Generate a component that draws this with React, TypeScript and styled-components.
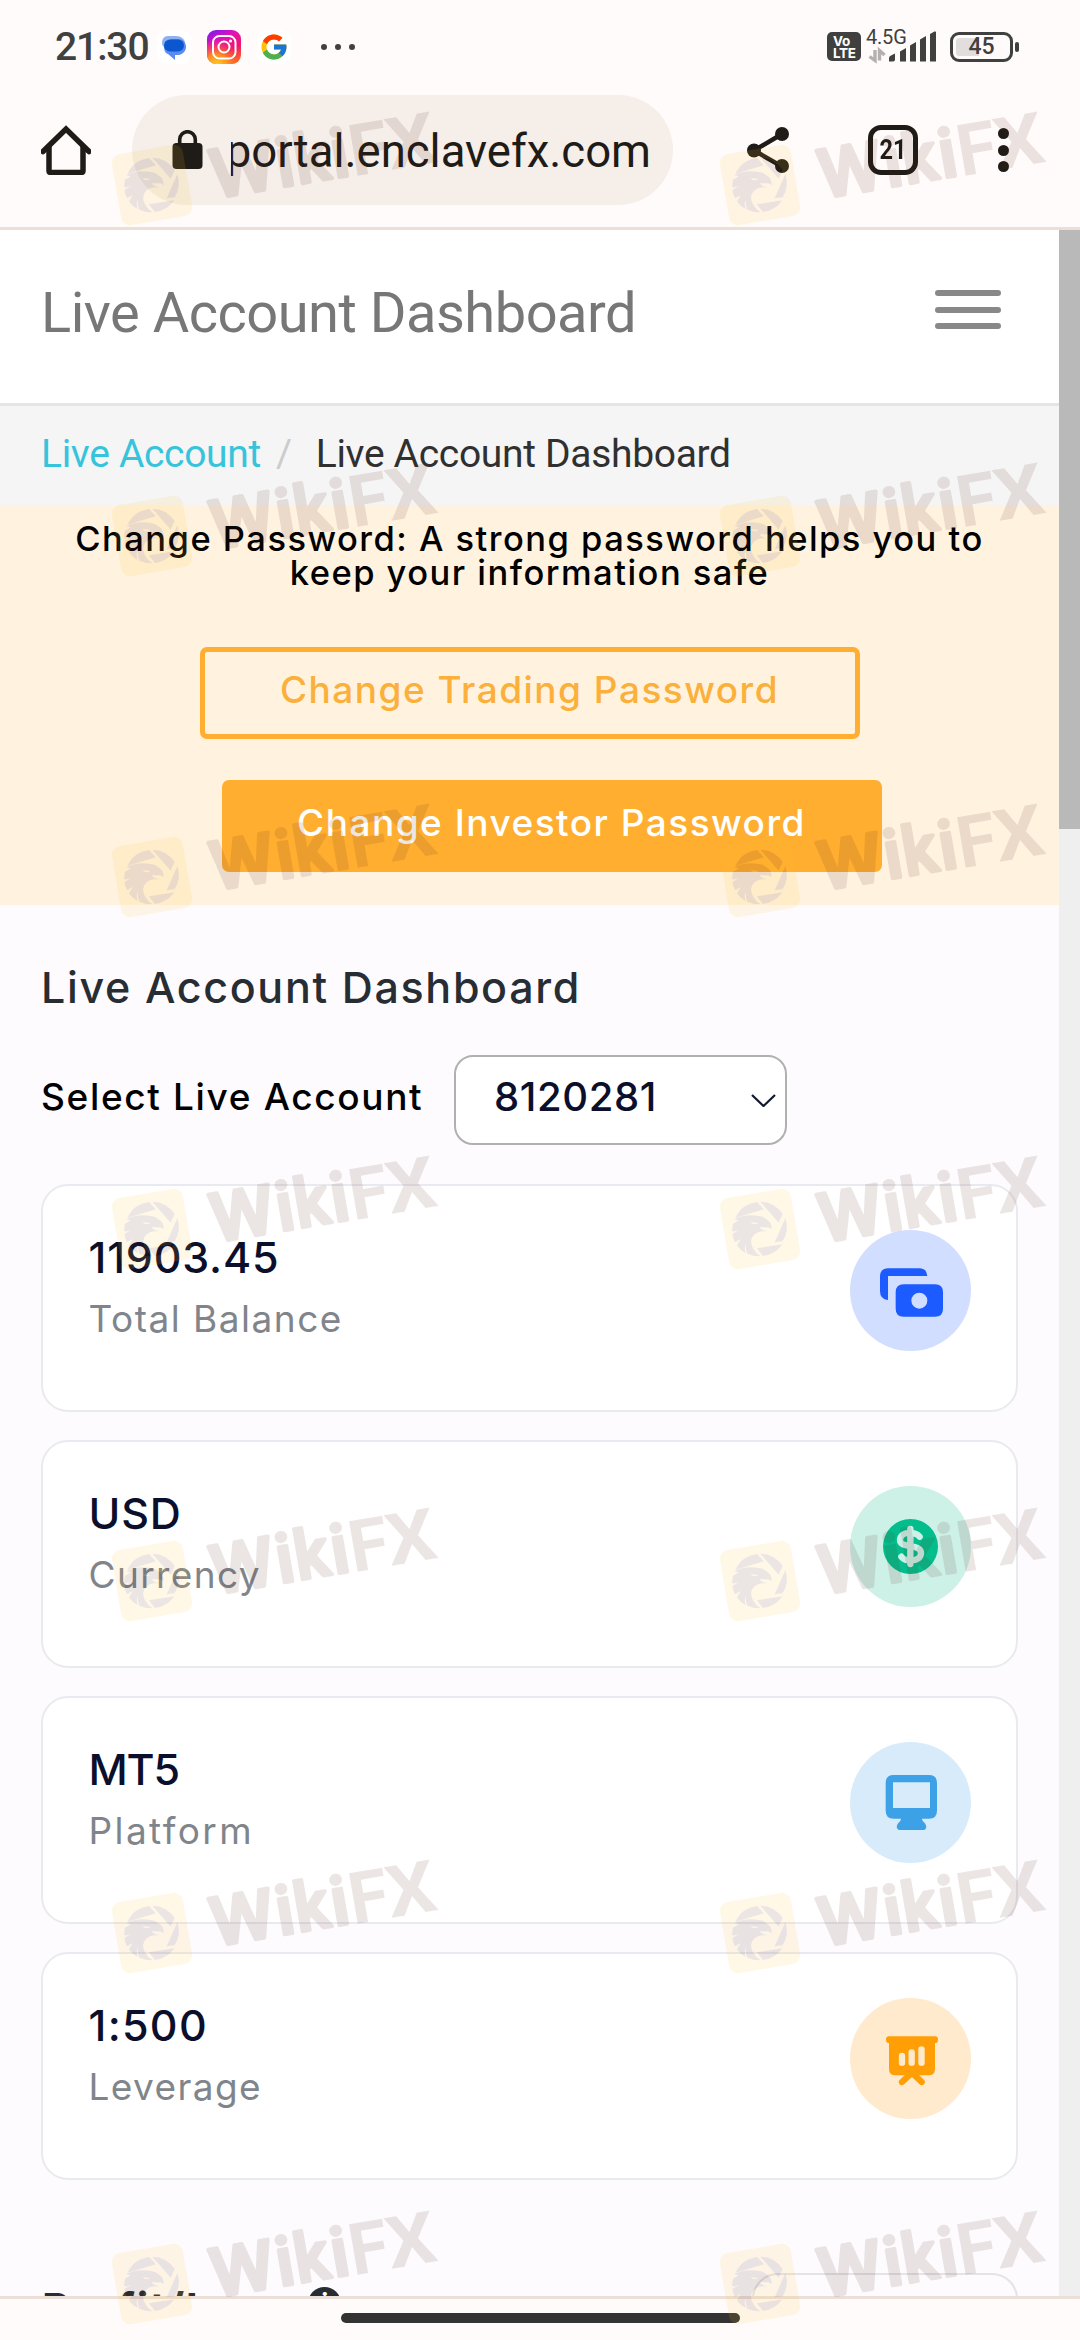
import React from "react";
import styled, { createGlobalStyle } from "styled-components";
import { FcGoogle } from "react-icons/fc";

const GlobalStyle = createGlobalStyle`
  * { box-sizing: border-box; }
  body { margin: 0; background: #fffbfa; }
`;

const roboto = `Roboto, "Noto Sans", sans-serif`;
const inter = `Inter, "Open Sans", sans-serif`;

const Screen = styled.div`
  position: relative;
  display: flex;
  flex-direction: column;
  width: 1080px;
  height: 2340px;
  overflow: hidden;
  background: #fffbfa;
  font-family: ${inter};
`;

/* ---------- system status bar ---------- */

const StatusBar = styled.div`
  display: flex;
  align-items: center;
  justify-content: space-between;
  height: 93px;
  padding: 0 61px 0 55px;
  font-family: ${roboto};
  color: #404040;
`;

const StatusGroup = styled.div`
  display: flex;
  align-items: center;
`;

const Clock = styled.span`
  width: 102px;
  font-size: 39px;
  font-weight: 500;
  line-height: 44px;
  letter-spacing: -1.1px;
`;

const AppBadge = styled.span`
  display: flex;
  align-items: center;
  justify-content: center;
  width: 34px;
  height: 34px;
  margin-right: 16px;
  border-radius: 9px;
  background: #fff;
`;

const Dots = styled.span`
  display: flex;
  gap: 8px;
  margin-left: 14px;
`;

const Dot = styled.i`
  width: 6px;
  height: 6px;
  border-radius: 50%;
  background: #404040;
`;

const VoLte = styled.span`
  display: flex;
  flex-direction: column;
  width: 34px;
  height: 29px;
  padding: 3px 0 0 6px;
  border-radius: 5px;
  background: #404040;
  color: #fff;
  font: 700 13.5px/12px ${inter};
  letter-spacing: -0.3px;
`;

const Network = styled.span`
  position: relative;
  width: 71px;
  height: 34px;
  margin: 0 13px 0 5px;
`;

const NetworkLabel = styled.span`
  position: absolute;
  left: 0;
  top: -5px;
  font-size: 20px;
  line-height: 24px;
  letter-spacing: -0.2px;
`;

const Battery = styled.span`
  display: flex;
  align-items: center;
`;

const BatteryBody = styled.span`
  display: flex;
  align-items: center;
  justify-content: center;
  width: 63px;
  height: 30px;
  border: 3px solid #404040;
  border-radius: 9px;
  background: linear-gradient(90deg, #e2dede 46%, transparent 46%) content-box;
  padding: 3px;
  font-size: 23px;
  font-weight: 500;
  line-height: 20px;
`;

const BatteryTip = styled.span`
  width: 4px;
  height: 10px;
  margin-left: 2px;
  border-radius: 2px;
  background: #404040;
`;

/* ---------- browser toolbar ---------- */

const Toolbar = styled.div`
  display: flex;
  align-items: center;
  height: 137px;
  padding: 0 66px 20px 41px;
  border-bottom: 3px solid #ecdfd8;
  font-family: ${roboto};
  color: #1f1b16;
`;

const Address = styled.div`
  display: flex;
  align-items: center;
  width: 541px;
  height: 110px;
  margin: 0 74px 0 41px;
  padding-left: 40px;
  border-radius: 55px;
  background: #f5eee9;
`;

const Url = styled.div`
  display: flex;
  justify-content: flex-end;
  width: 420px;
  margin-left: 28px;
  overflow: hidden;
  font-size: 45.5px;
  line-height: 60px;
  padding-top: 3px;
  white-space: nowrap;
`;

const TabBox = styled.div`
  display: flex;
  align-items: center;
  justify-content: center;
  width: 50px;
  height: 50px;
  margin: 0 80px 0 79px;
  border: 5px solid #1f1b16;
  border-radius: 13px;
`;

const TabCount = styled.span`
  font-size: 28px;
  font-weight: 700;
  line-height: 32px;
  transform: scaleX(0.84);
`;

const MenuDots = styled.div`
  display: flex;
  flex-direction: column;
  gap: 5.5px;
`;

const MenuDot = styled.i`
  width: 11px;
  height: 11px;
  border-radius: 50%;
  background: #1f1b16;
`;

/* ---------- page ---------- */

const Viewport = styled.div`
  display: flex;
  height: 2066px;
  overflow: hidden;
`;

const Page = styled.div`
  width: 1059px;
  flex: none;
  background: #fdfbfe;
`;

const Scrollbar = styled.div`
  width: 21px;
  background: #efefef;
`;

const ScrollThumb = styled.div`
  height: 599px;
  background: #b9b9b9;
`;

const Header = styled.header`
  display: flex;
  align-items: center;
  justify-content: space-between;
  height: 176px;
  padding: 0 58px 7px 41px;
  border-bottom: 3px solid #e5e5e5;
  background: #fff;
`;

const PageTitle = styled.h1`
  margin: 0;
  font: 400 56px/66px ${roboto};
  letter-spacing: -0.5px;
  color: #777;
`;

const Burger = styled.div`
  display: flex;
  flex-direction: column;
  justify-content: space-between;
  width: 66px;
  height: 39px;
  margin-bottom: 7px;
`;

const BurgerBar = styled.i`
  height: 6px;
  border-radius: 3px;
  background: #888;
`;

const Breadcrumb = styled.nav`
  display: flex;
  align-items: center;
  height: 99px;
  padding: 0 41px 3px;
  background: #f5f5f5;
  font: 400 39px/48px ${roboto};
  letter-spacing: -0.32px;
  color: #303030;
`;

const Crumb = styled.a`
  color: #35c4dc;
`;

const Slash = styled.span`
  margin: 0 24px 0 15px;
  color: #ccc;
`;

const Alert = styled.section`
  display: flex;
  flex-direction: column;
  align-items: center;
  height: 400px;
  padding-top: 17px;
  background: #fff3e0;
`;

const AlertText = styled.p`
  margin: 0 0 57px;
  font-size: 34.5px;
  font-weight: 500;
  line-height: 34px;
  letter-spacing: 1.48px;
  text-align: center;
  color: #000;
`;

const Button = styled.button<{ $solid?: boolean }>`
  flex: none;
  width: 660px;
  height: 92px;
  margin: 0 0 41px ${(p) => (p.$solid ? 44 : 0)}px;
  padding: 0 0 7px;
  border: 5px solid #ffae2f;
  border-radius: 7px;
  background: ${(p) => (p.$solid ? "#ffae2f" : "transparent")};
  color: ${(p) => (p.$solid ? "#fff" : "#fbb03b")};
  font: 500 37px/44px ${inter};
  letter-spacing: 1.48px;
`;

const Content = styled.main`
  padding: 57px 41px 0;
`;

const SectionTitle = styled.h2<{ $bold?: boolean }>`
  margin: 0;
  font-size: 43px;
  font-weight: ${(p) => (p.$bold ? 700 : 500)};
  line-height: 50px;
  letter-spacing: 1.65px;
  color: #272d33;
`;

const SelectRow = styled.div`
  display: flex;
  align-items: center;
  margin: 43px 0 39px;
`;

const SelectLabel = styled.label`
  width: 413px;
  padding-bottom: 7px;
  font-size: 37px;
  font-weight: 500;
  line-height: 44px;
  letter-spacing: 1.65px;
  white-space: nowrap;
  color: #000;
`;

const SelectBox = styled.div`
  display: flex;
  align-items: center;
  justify-content: space-between;
  width: 333px;
  height: 90px;
  padding: 0 9px 0 38px;
  border: 2px solid #b0b0b0;
  border-radius: 19px;
  background: #fff;
`;

const SelectValue = styled.span`
  padding-bottom: 7px;
  font-size: 40px;
  font-weight: 500;
  line-height: 48px;
  letter-spacing: 0.6px;
  color: #0b0f2b;
`;

const CardList = styled.div`
  display: flex;
  flex-direction: column;
  gap: 28px;
`;

const Card = styled.article`
  display: flex;
  justify-content: space-between;
  height: 228px;
  padding: 39.5px 45px 0 45.5px;
  border: 2px solid #e8eaef;
  border-radius: 27px;
  background: #fff;
`;

const CardValue = styled.div<{ $spacing: number }>`
  font-size: 43px;
  font-weight: 500;
  line-height: 62px;
  letter-spacing: ${(p) => p.$spacing}px;
  color: #0b0f2b;
`;

const CardLabel = styled.div<{ $spacing: number }>`
  font-size: 37px;
  font-weight: 400;
  line-height: 62px;
  letter-spacing: ${(p) => p.$spacing}px;
  color: #7f858b;
`;

const Disc = styled.div<{ $bg: string }>`
  width: 121px;
  height: 121px;
  margin-top: 4.5px;
  border-radius: 50%;
  background: ${(p) => p.$bg};
`;

const ProfitRow = styled.div`
  display: flex;
  align-items: flex-start;
  margin-top: 93px;
`;

const ProfitTitle = styled.div`
  display: flex;
  align-items: center;
  flex: 1;
  padding: 10px 0 0 1px;
`;

const InfoDot = styled.span`
  display: flex;
  align-items: center;
  justify-content: center;
  width: 33px;
  height: 33px;
  margin: 0 0 9px 17px;
  border-radius: 50%;
  background: #272d33;
  color: #fff;
  font-size: 26px;
  font-weight: 700;
`;

const ProfitBox = styled.div`
  width: 266px;
  height: 90px;
  border: 2px solid #e4e3e6;
  border-radius: 26px;
`;

const NavBar = styled.div`
  display: flex;
  justify-content: center;
  height: 44px;
  padding-top: 14px;
  border-top: 3px solid #ecdfd8;
`;

const NavHandle = styled.div`
  width: 399px;
  height: 10px;
  border-radius: 5px;
  background: #333;
`;

const Mark = styled.svg<{ $x: number; $y: number }>`
  position: absolute;
  left: ${(p) => p.$x}px;
  top: ${(p) => p.$y}px;
  width: 330px;
  height: 118.33px;
  pointer-events: none;
`;

/* ---------- drawings ---------- */

const MessagesIcon = () => (
  <svg width="34" height="34" viewBox="0 0 34 34">
    <path d="M11 6h8c5 0 8 3 9 6l-19 6c-3-1-4-3-4-5 0-4 2-7 6-7z" fill="#8fb1f3" />
    <path d="M14 9h7c5 0 8 3 8 8 0 4-3 7-7 8h-4v5l-7-6c-3-1-4-4-4-8z" fill="#5b8df0" />
    <rect x="7" y="9.500" width="20" height="12" rx="6" fill="#0b57d0" />
  </svg>
);

const InstagramIcon = () => (
  <svg width="34" height="34" viewBox="0 0 34 34">
    <defs>
      <linearGradient id="igBase" x1="0.1" y1="0" x2="0.6" y2="1">
        <stop offset="0" stopColor="#7a1bf0" />
        <stop offset="0.35" stopColor="#e312b4" />
        <stop offset="0.7" stopColor="#f0156c" />
        <stop offset="1" stopColor="#fb5a2a" />
      </linearGradient>
      <radialGradient id="igWarm" cx="0.28" cy="1.05" r="0.75">
        <stop offset="0" stopColor="#ffd51e" />
        <stop offset="0.45" stopColor="#ff9a1c" stopOpacity="0.9" />
        <stop offset="1" stopColor="#ff5533" stopOpacity="0" />
      </radialGradient>
    </defs>
    <rect width="34" height="34" rx="9" fill="url(#igBase)" />
    <rect width="34" height="34" rx="9" fill="url(#igWarm)" />
    <g fill="none" stroke="#fff" strokeWidth="2">
      <rect x="6" y="6" width="22.500" height="22.500" rx="6.500" />
      <circle cx="17" cy="17" r="5.500" />
    </g>
    <circle cx="23.500" cy="11" r="1.600" fill="#fff" />
  </svg>
);

const SignalIcon = () => (
  <svg width="71" height="34" viewBox="0 0 71 34">
    <g fill="#404040">
      <path d="M23 28q0-2 3-3l3-1.500v6q0 2-2 2h-4z" />
      <path d="M34 21.500l6-3.500v13.500h-6z" />
      <path d="M44 15.500l6-3.500v19.500h-6z" />
      <path d="M54 9.500l6-3.500v25.500h-6z" />
      <path d="M64 4l5-2.800 1 .8v29.500h-6z" />
    </g>
    <path d="M9 20v10.500L3.500 26.500M13.500 30.500V20.500l5 4.500" fill="none" stroke="#b5b0b0" strokeWidth="3.400" />
  </svg>
);

const HomeIcon = () => (
  <svg width="50" height="50" viewBox="0 0 50 50" fill="none" stroke="#1f1b16" strokeWidth="5.500">
    <path d="M2 26.500L25 4l23 22.500" strokeLinecap="round" />
    <path d="M8 21v24.500q0 2 2 2h30q2 0 2-2V21" />
  </svg>
);

const LockIcon = () => (
  <svg width="31" height="40" viewBox="0 0 31 40">
    <rect x="0.500" y="13" width="30" height="26" rx="4" fill="#1f1b16" />
    <path d="M7.700 15V9.500a7.800 7.800 0 0 1 15.600 0V15" fill="none" stroke="#1f1b16" strokeWidth="3.600" />
  </svg>
);

const ShareIcon = () => (
  <svg width="42" height="46" viewBox="0 0 42 46">
    <path d="M35 7L7 23.500 35 39.500" fill="none" stroke="#1f1b16" strokeWidth="4.500" />
    <g fill="#1f1b16">
      <circle cx="35" cy="7" r="7" />
      <circle cx="7" cy="23.500" r="7" />
      <circle cx="35" cy="39" r="7" />
    </g>
  </svg>
);

const Chevron = () => (
  <svg width="25" height="14" viewBox="0 0 25 14">
    <path d="M1 2l11.500 11L24 2" fill="none" stroke="#111830" strokeWidth="2.200" />
  </svg>
);

const BanknotesIcon = () => (
  <svg width="121" height="121" viewBox="450 270 363 363">
    <g fill="#1c5bff">
      <path d="M564 480q-24-2-24-26v-44q0-25 25-25h92q24 0 25 23H564z" />
      <path
        fillRule="evenodd"
        d="M611 433h94q24 0 24 24v49q0 24-24 24h-94q-24 0-24-24v-49q0-24 24-24zm47 25a24 24 0 1 0 0 48a24 24 0 1 0 0-48z"
      />
    </g>
  </svg>
);

const DollarIcon = () => (
  <svg width="121" height="121" viewBox="450 1038 363 363">
    <circle cx="631.500" cy="1219.500" r="82.500" fill="#04bd8c" />
    <path
      d="M631 1167v105M659 1190C647 1175 603 1172 600 1198C598 1229 664 1208 663 1240C661 1268 616 1265 604 1250"
      fill="none"
      stroke="#cdf0e7"
      strokeWidth="19"
      strokeLinecap="round"
    />
  </svg>
);

const MonitorIcon = () => (
  <svg width="121" height="121" viewBox="450 126 363 363">
    <path
      fill="#3da1e8"
      fillRule="evenodd"
      d="M581 225h106q24 0 24 24v83q0 24-24 24h-21q0 6 6 11q7 6 7 13q-1 10-11 10h-66q-11 0-12-10q0-7 7-13q6-5 6-11h-22q-24 0-24-24v-83q0-24 24-24zm-2 22v77h111v-77z"
    />
  </svg>
);

const PresentationIcon = () => (
  <svg width="121" height="121" viewBox="450 894 363 363">
    <path
      fill="#ff9f05"
      d="M567 1009h138q9 0 9 10t-9 10v77q0 20-20 20H587q-20 0-20-20v-77q-9 0-9-10t9-10z"
    />
    <g fill="none" strokeWidth="19" strokeLinecap="round">
      <path d="M606 1146l30-28 29 28" stroke="#ff9f05" />
      <path d="M606 1068v20M635 1057v31M664.500 1048v40" stroke="#ffeacd" />
    </g>
  </svg>
);

const EagleShape = () => (
  <>
    <path d="M108 233A82 82 0 0 1 172 187L193 209L108 234Z" />
    <path d="M182 186A82 82 0 0 1 249 223L237 249L182 186Z" />
    <path d="M257 235A82 82 0 0 1 249 305L225 308L257 235Z" />
    <path d="M248 314A82 82 0 0 1 190 349L171 326L248 314Z" />
    <path
      fillRule="evenodd"
      d="M103 239Q136 221 181 230Q194 231 200 239Q216 246 216 269Q209 262 200 263Q190 264 184 261Q179 265 186 269L204 277Q180 271 165 284Q146 302 161 327Q168 341 183 350Q160 350 143 342Q137 328 138 312Q132 326 139 340Q121 332 112 317Q118 307 123 298Q114 304 106 308Q100 297 98 283L119 270Q106 276 98 275Q97 266 100 252L117 242ZM152 246Q164 260 176 249Q164 250 152 246Z"
    />
  </>
);

const MaskHolder = styled.svg`
  position: absolute;
  width: 0;
  height: 0;
`;

const WatermarkDefs = () => (
  <MaskHolder>
    <defs>
      <mask id="eagleCut" maskUnits="userSpaceOnUse" x="40" y="130" width="290" height="280">
        <rect x="40" y="130" width="290" height="280" fill="#fff" />
        <g fill="#000">
          <EagleShape />
        </g>
      </mask>
    </defs>
  </MaskHolder>
);

const Watermark = ({ x, y }: { x: number; y: number }) => (
  <Mark $x={x} $y={y} viewBox="55 40 990 355">
    <g mask="url(#eagleCut)">
      <rect
        x="73"
        y="160"
        width="216"
        height="216"
        rx="27"
        fill="#ffc332"
        fillOpacity="0.12"
        transform="rotate(-9.700 181 268)"
      />
    </g>
    <g opacity="0.115" fill="#5a261e" stroke="#5a261e">
      <g stroke="none">
        <EagleShape />
      </g>
      <g transform="rotate(-9.700)" fontFamily="Roboto, sans-serif" fontSize="204" strokeLinejoin="round">
        <g fontWeight="500" strokeWidth="11">
          <text x="312" y="366" textLength="190" lengthAdjust="spacingAndGlyphs">W</text>
          <text x="511" y="366">i</text>
          <text x="567" y="366" textLength="102" lengthAdjust="spacingAndGlyphs">k</text>
          <text x="677" y="366">i</text>
        </g>
        <g fontSize="216" fontWeight="700" stroke="none">
          <text x="733" y="371">F</text>
          <text x="847" y="371" textLength="148" lengthAdjust="spacingAndGlyphs">X</text>
        </g>
      </g>
    </g>
  </Mark>
);

const cards = [
  { value: "11903.45", label: "Total Balance", bg: "#d1deff", Icon: BanknotesIcon, vs: 0.8, ls: 1.5 },
  { value: "USD", label: "Currency", bg: "#cdf0e7", Icon: DollarIcon, vs: 0.8, ls: 1.4 },
  { value: "MT5", label: "Platform", bg: "#d8ebfa", Icon: MonitorIcon, vs: -1.2, ls: 2.4 },
  { value: "1:500", label: "Leverage", bg: "#ffeacd", Icon: PresentationIcon, vs: 1.3, ls: 1.4 },
];

const markRows = [108.8, 460.3, 801.3, 1153.3, 1505.3, 1857.3, 2208.3];

export default function App() {
  return (
    <Screen>
      <GlobalStyle />
      <StatusBar>
        <StatusGroup>
          <Clock>21:30</Clock>
          <AppBadge><MessagesIcon /></AppBadge>
          <AppBadge><InstagramIcon /></AppBadge>
          <AppBadge><FcGoogle size={30} /></AppBadge>
          <Dots><Dot /><Dot /><Dot /></Dots>
        </StatusGroup>
        <StatusGroup>
          <VoLte><span>Vo</span><span>LTE</span></VoLte>
          <Network>
            <NetworkLabel>4.5G</NetworkLabel>
            <SignalIcon />
          </Network>
          <Battery><BatteryBody>45</BatteryBody><BatteryTip /></Battery>
        </StatusGroup>
      </StatusBar>

      <Toolbar>
        <HomeIcon />
        <Address>
          <LockIcon />
          <Url>portal.enclavefx.com</Url>
        </Address>
        <ShareIcon />
        <TabBox><TabCount>21</TabCount></TabBox>
        <MenuDots><MenuDot /><MenuDot /><MenuDot /></MenuDots>
      </Toolbar>

      <Viewport>
        <Page>
          <Header>
            <PageTitle>Live Account Dashboard</PageTitle>
            <Burger><BurgerBar /><BurgerBar /><BurgerBar /></Burger>
          </Header>
          <Breadcrumb>
            <Crumb>Live Account</Crumb>
            <Slash>/</Slash>
            <span>Live Account Dashboard</span>
          </Breadcrumb>
          <Alert>
            <AlertText>
              Change Password: A strong password helps you to
              <br />
              keep your information safe
            </AlertText>
            <Button>Change Trading Password</Button>
            <Button $solid>Change Investor Password</Button>
          </Alert>
          <Content>
            <SectionTitle>Live Account Dashboard</SectionTitle>
            <SelectRow>
              <SelectLabel>Select Live Account</SelectLabel>
              <SelectBox>
                <SelectValue>8120281</SelectValue>
                <Chevron />
              </SelectBox>
            </SelectRow>
            <CardList>
              {cards.map(({ value, label, bg, Icon, vs, ls }) => (
                <Card key={label}>
                  <div>
                    <CardValue $spacing={vs}>{value}</CardValue>
                    <CardLabel $spacing={ls}>{label}</CardLabel>
                  </div>
                  <Disc $bg={bg}><Icon /></Disc>
                </Card>
              ))}
            </CardList>
            <ProfitRow>
              <ProfitTitle>
                <SectionTitle $bold>Profit/Loss</SectionTitle>
                <InfoDot>i</InfoDot>
              </ProfitTitle>
              <ProfitBox />
            </ProfitRow>
          </Content>
        </Page>
        <Scrollbar><ScrollThumb /></Scrollbar>
      </Viewport>

      <NavBar><NavHandle /></NavBar>

      <WatermarkDefs />
      {markRows.map((y) => (
        <React.Fragment key={y}>
          <Watermark x={110.3} y={y} />
          <Watermark x={718.3} y={y} />
        </React.Fragment>
      ))}
    </Screen>
  );
}
